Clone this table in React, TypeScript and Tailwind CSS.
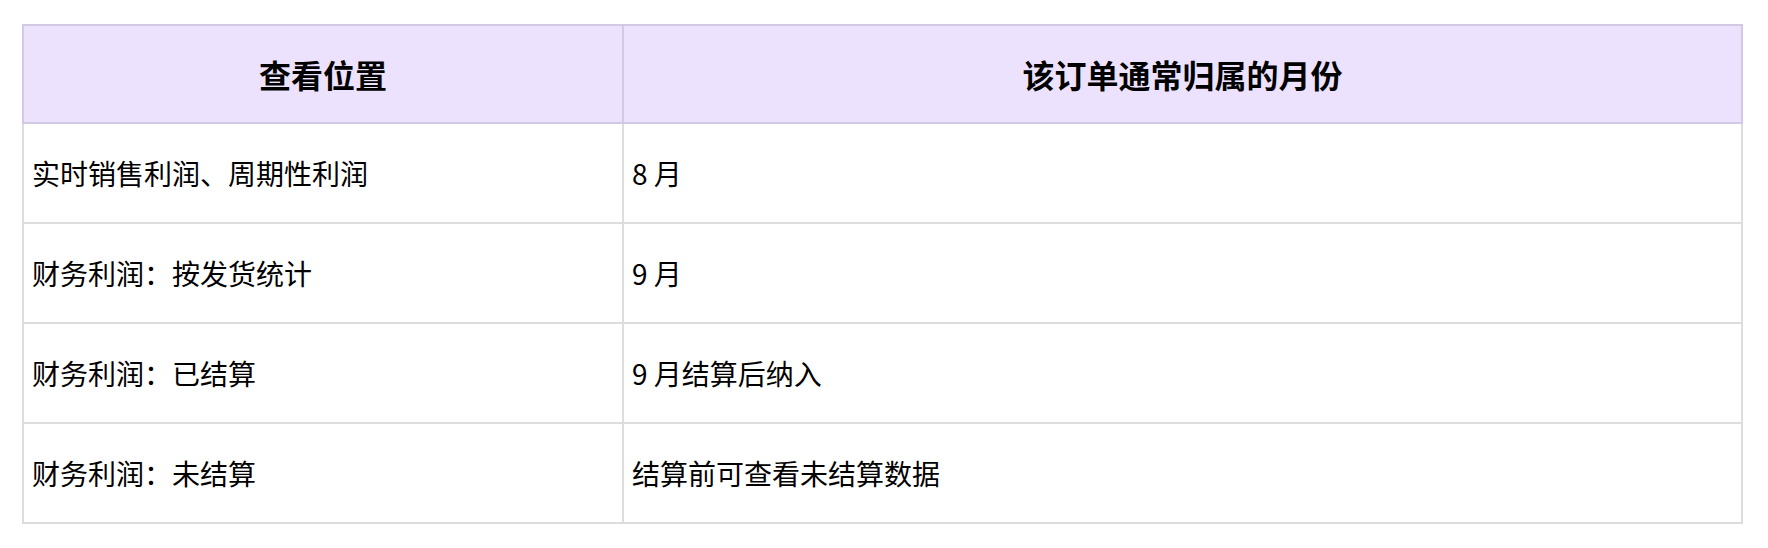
const rows = [
  ["实时销售利润、周期性利润", "8 月"],
  ["财务利润：按发货统计", "9 月"],
  ["财务利润：已结算", "9 月结算后纳入"],
  ["财务利润：未结算", "结算前可查看未结算数据"],
];

export default function App() {
  return (
    <div
      className="min-h-screen bg-white px-[22px] pt-[24px] text-black"
      style={{ fontFamily: '"Noto Sans CJK SC", "Noto Sans", sans-serif' }}
    >
      <table className="w-[1721px] table-fixed border-collapse">
        <colgroup>
          <col className="w-[600px]" />
          <col />
        </colgroup>
        <thead>
          <tr className="h-[98px] bg-[#ece2fd]">
            <th className="border-2 border-[#d2c9e4] text-center text-[32px] font-bold">
              查看位置
            </th>
            <th className="border-2 border-[#d2c9e4] text-center text-[32px] font-bold">
              该订单通常归属的月份
            </th>
          </tr>
        </thead>
        <tbody>
          {rows.map(([place, month]) => (
            <tr key={place} className="h-[100px]">
              <td className="border-2 border-[#dddddd] px-[8px] text-[28px]">{place}</td>
              <td className="border-2 border-[#dddddd] px-[8px] text-[28px]">{month}</td>
            </tr>
          ))}
        </tbody>
      </table>
    </div>
  );
}
